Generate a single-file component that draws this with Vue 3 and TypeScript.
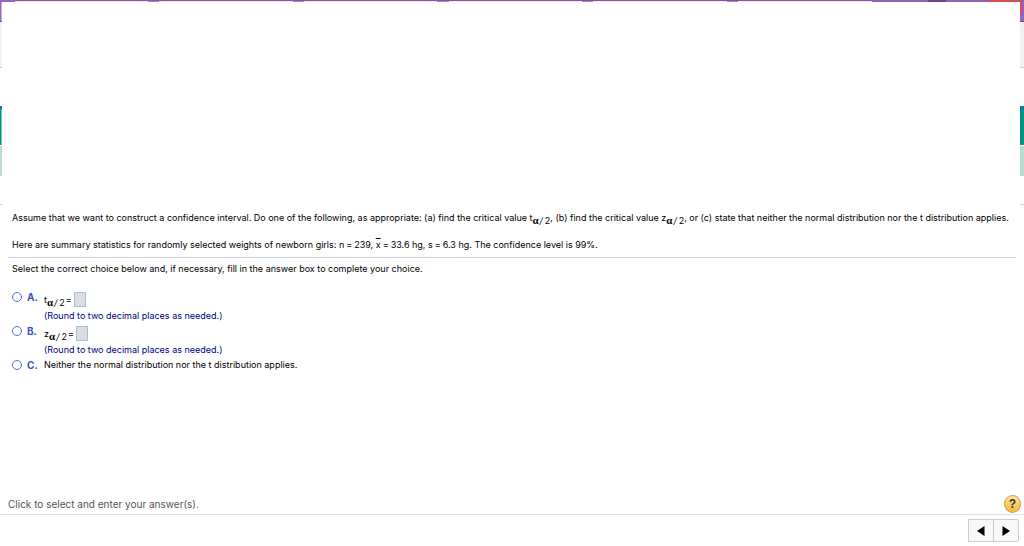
<script setup lang="ts">
import { ref } from 'vue'

const choice = ref('')
const tValue = ref('')
const zValue = ref('')
const segments = ['purple', 'light', 'gap', 'teal', 'mint', 'blank']
</script>

<template>
  <div class="page">
    <header class="banner">
      <div class="strip"></div>
      <div class="sides">
        <div class="side left">
          <div v-for="s in segments" :key="s" class="seg" :class="s"></div>
        </div>
        <div class="side right">
          <div v-for="s in segments" :key="s" class="seg" :class="s"></div>
        </div>
      </div>
    </header>

    <main class="content">
      <section class="question">
        <p class="lead">Assume that we want to construct a confidence interval. Do one of the following, as appropriate: (a) find the critical value t<span class="sub"><b>α</b><i>/</i>2</span>, (b) find the critical value z<span class="sub"><b>α</b><i>/</i>2</span>, or (c) state that neither the normal distribution nor the t distribution applies.</p>
        <p class="stats">Here are summary statistics for randomly selected weights of newborn girls: n<span class="eq">=</span>239, <span class="bar">x</span><span class="eq">=</span>33.6 hg, s<span class="eq">=</span>6.3 hg. The confidence level is 99%.</p>
      </section>

      <form class="answers" @submit.prevent>
        <p class="prompt">Select the correct choice below and, if necessary, fill in the answer box to complete your choice.</p>
        <div class="option">
          <input id="a" v-model="choice" type="radio" name="choice" value="A">
          <label class="letter" for="a">A.</label>
          <div class="body">
            <div class="formula"><label for="ta">t<span class="sub"><b>α</b><i>/</i>2</span></label><span class="eq">=</span><input id="ta" v-model="tValue" class="box" type="text"></div>
            <p class="note">(Round to two decimal places as needed.)</p>
          </div>
        </div>
        <div class="option">
          <input id="b" v-model="choice" type="radio" name="choice" value="B">
          <label class="letter" for="b">B.</label>
          <div class="body">
            <div class="formula"><label for="zb">z<span class="sub"><b>α</b><i>/</i>2</span></label><span class="eq">=</span><input id="zb" v-model="zValue" class="box" type="text"></div>
            <p class="note">(Round to two decimal places as needed.)</p>
          </div>
        </div>
        <div class="option">
          <input id="c" v-model="choice" type="radio" name="choice" value="C">
          <label class="letter" for="c">C.</label>
          <label class="body" for="c">Neither the normal distribution nor the t distribution applies.</label>
        </div>
      </form>
    </main>

    <footer>
      <div class="status">
        <span>Click to select and enter your answer(s).</span>
        <button class="help" type="button" aria-label="Help">?</button>
      </div>
      <nav class="pager">
        <button type="button" aria-label="Previous"><svg width="8" height="10" viewBox="0 0 8 10"><path d="M7.500 0V10L0 5Z" /></svg></button>
        <button type="button" aria-label="Next"><svg width="8" height="10" viewBox="0 0 8 10"><path d="M.5 0V10L8 5Z" /></svg></button>
      </nav>
    </footer>
  </div>
</template>

<style>
body {
  background: #fff;
}
</style>

<style scoped>
.page {
  min-height: 100vh;
  display: flex;
  flex-direction: column;
  font: 9px/14px Inter, "Liberation Sans", Arial, sans-serif;
  color: #000;
}
p {
  margin: 0;
}
.strip {
  height: 2px;
  background:
    linear-gradient(90deg, #9465bd 15px, transparent 15px) no-repeat,
    linear-gradient(90deg, transparent 872px, #8f62b8 872px 928px, #694984 928px 946px, #8f62b8 946px 988px, #d1504f 988px 1021px, #8f62b8 1021px) no-repeat,
    linear-gradient(#80599c 1px, transparent 1px) no-repeat,
    linear-gradient(90deg, transparent 148px, #ad80d0 148px 159px, transparent 159px 293px, #ad80d0 293px 304px, transparent 304px 437px, #ad80d0 437px 449px, transparent 449px 582px, #ad80d0 582px 593px, transparent 593px 727px, #ad80d0 727px 738px, transparent 738px),
    #eee6f4;
}
.sides {
  display: flex;
  justify-content: space-between;
}
.left {
  width: 2px;
}
.right {
  width: 4px;
}
.seg {
  box-sizing: border-box;
}
.purple {
  height: 20px;
  background: #9465bd;
  border-bottom: 1px solid #694984;
}
.right .purple {
  background: linear-gradient(#d1504f, #d1504f) 0 0 / 2px 12px no-repeat, #9465bd;
}
.left .purple {
  background: linear-gradient(90deg, #9465bd 1px, #cdb4e2 1px);
}
.light {
  height: 46px;
  background: #f2f2f2;
  border-bottom: 1px solid #ccc;
}
.gap {
  height: 38px;
}
.teal {
  height: 39px;
  background: #009485;
  border-top: 3px solid #0079a5;
}
.left .teal {
  background: linear-gradient(90deg, #009485 1px, #7cc8c0 1px);
}
.mint {
  height: 31px;
  background: #b9dcd5;
  border-top: 1px solid #fff;
}
.blank {
  height: 29px;
  border-bottom: 1px solid #ccd0de;
}
.content {
  flex: 1;
}
.question {
  margin: 0 8px;
  padding: 6px 4px 5px;
  border-bottom: 1px solid #ccd0e4;
}
.lead,
.stats {
  margin-right: -8px;
}
.stats {
  margin-top: 13px;
}
.sub {
  position: relative;
  top: 3px;
  line-height: 10px;
}
.sub b {
  font: bold 11px/10px "Liberation Serif", serif;
}
.sub i {
  margin: 0 2px 0 1px;
}
.eq {
  margin: 0 2px;
}
.formula .eq {
  margin: 0 2px 0 1px;
}
.bar {
  text-decoration: overline;
}
.answers {
  padding: 4px 12px;
}
.prompt {
  margin-bottom: 14px;
}
.option {
  display: flex;
  align-items: flex-start;
}
.option input[type="radio"] {
  appearance: none;
  box-sizing: border-box;
  width: 10px;
  height: 10px;
  margin: 2px 5px 0 0;
  border: 1px solid #5470d6;
  border-radius: 50%;
  background: #fff;
}
.option input[type="radio"]:checked {
  background: #5470d6;
}
.letter {
  width: 17px;
  font-size: 10px;
  font-weight: bold;
  color: #3f51c8;
}
.formula {
  display: flex;
  align-items: center;
  height: 19px;
}
.box {
  box-sizing: border-box;
  width: 12px;
  height: 15px;
  padding: 0;
  border: 1px solid #a5bdec;
  background: #ddd;
}
.note {
  height: 15px;
  color: #000080;
}
.status {
  display: flex;
  align-items: center;
  justify-content: space-between;
  padding: 0 3px 1px 8px;
  border-bottom: 1px solid #dfe1ec;
  font-size: 10px;
  color: #555;
}
.help {
  width: 17px;
  height: 18px;
  padding: 0;
  border: 1px solid #c9a04a;
  border-radius: 50%;
  background: linear-gradient(#ffe394, #f6b93c);
  font: bold 12px/15px "Liberation Sans", Arial, sans-serif;
  color: #333;
}
.pager {
  display: flex;
  justify-content: flex-end;
  padding: 4px 5px 4px 0;
}
.pager button {
  box-sizing: border-box;
  display: flex;
  align-items: center;
  justify-content: center;
  width: 26px;
  height: 23px;
  padding: 0;
  border: 1px solid #ccc;
  background: #f8f8f8;
}
.pager button + button {
  margin-left: -1px;
  border-radius: 0 2px 2px 0;
}
</style>
